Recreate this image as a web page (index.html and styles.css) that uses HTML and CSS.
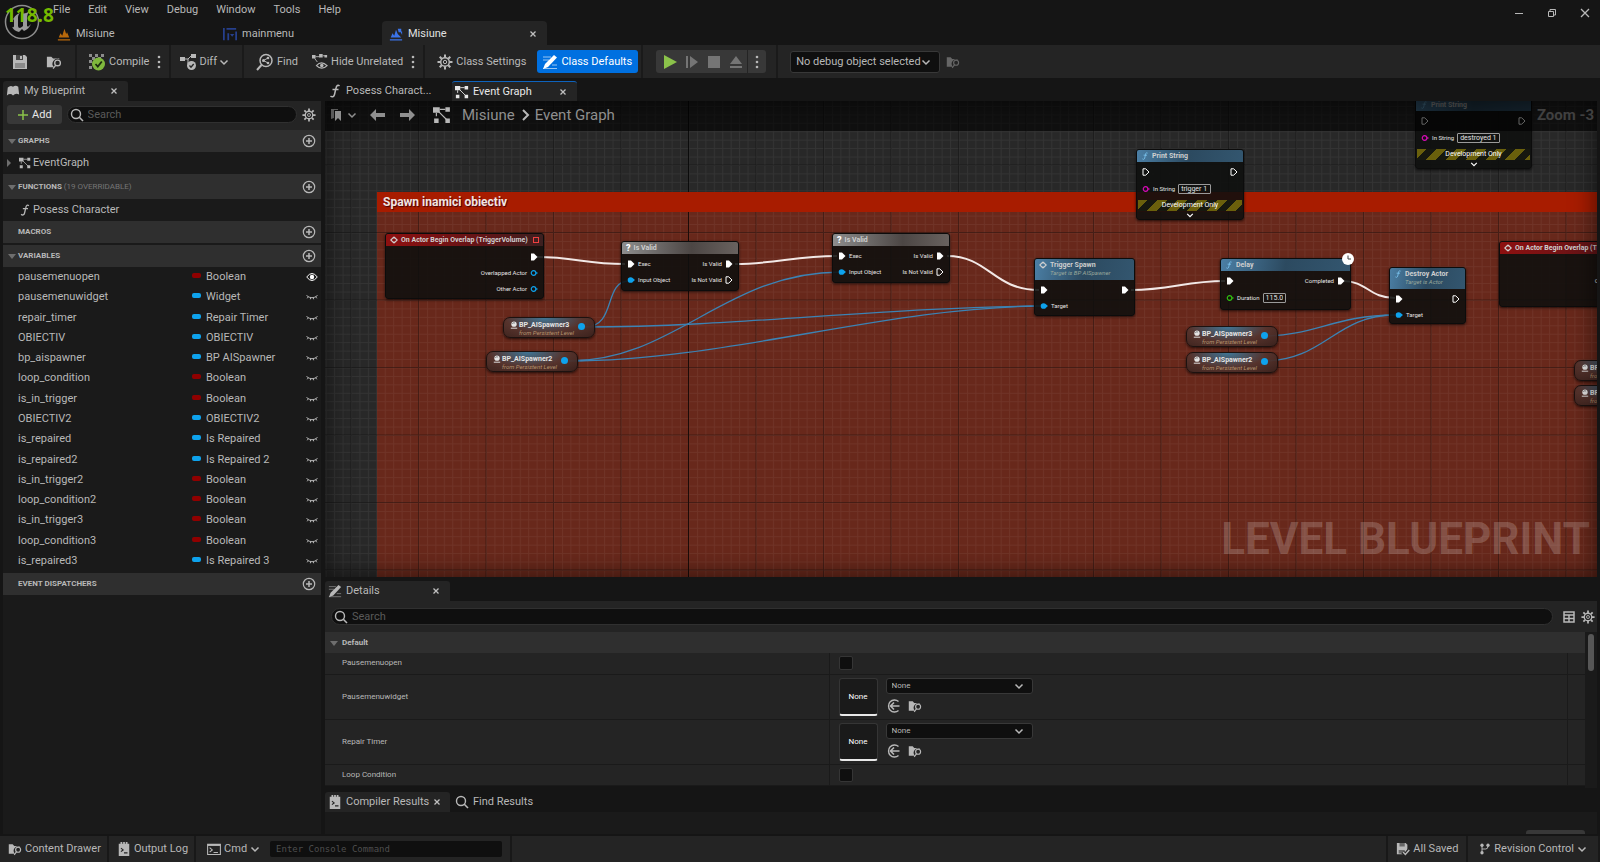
FILE: index.html
```html
<!DOCTYPE html>
<html lang="en">
<head>
    <meta charset="UTF-8">
    <meta name="viewport" content="width=device-width, initial-scale=1.0">
    <title>Misiune - Blueprint Editor</title>
    <link rel="stylesheet" href="styles.css">
</head>
<body>
    <!-- Icon sprites -->
    <svg class="sprites" aria-hidden="true">
        <symbol id="i-level" viewBox="0 0 16 16"><path d="M1 14h14v1.500H1zM2 12l2-5 2 3 2.500-8 2 6 1-2 2.500 6z" fill="currentColor"/></symbol>
        <symbol id="i-levelbp" viewBox="0 0 16 16"><path d="M1 14h14v1.500H1zM2 12l2-5 2 3 2-7 2 5 4 4z" fill="currentColor"/><path d="M10 2h4v4h-3zM13 5h2v4" fill="currentColor"/></symbol>
        <symbol id="i-widget" viewBox="0 0 16 16"><path d="M1 1v14M4 2h11M6 7v8M15 5v10" stroke="currentColor" stroke-width="2" fill="none"/><path d="M8 8h5l-2.500 3z" fill="currentColor"/></symbol>
        <symbol id="i-x" viewBox="0 0 8 8"><path d="M1.500 1.500l5 5M6.500 1.500l-5 5" stroke="currentColor" stroke-width="1.300"/></symbol>
        <symbol id="i-chev" viewBox="0 0 10 10"><path d="M1.500 3.500L5 7l3.500-3.500" stroke="currentColor" stroke-width="1.500" fill="none"/></symbol>
        <symbol id="i-dots" viewBox="0 0 4 14"><circle cx="2" cy="2" r="1.300" fill="currentColor"/><circle cx="2" cy="7" r="1.300" fill="currentColor"/><circle cx="2" cy="12" r="1.300" fill="currentColor"/></symbol>
        <symbol id="i-save" viewBox="0 0 16 16"><path d="M1 1h12l2 2v12H1z" fill="currentColor"/><path d="M4 1h7v5H4z" fill="#444"/><path d="M8 2h2v3H8z" fill="currentColor"/><path d="M3 9h10v5H3z" fill="#8a8a8a"/></symbol>
        <symbol id="i-browse" viewBox="0 0 18 16"><path d="M1 2h5l2 2h7v1a5.500 5.500 0 0 0-6 9H1z" fill="currentColor"/><circle cx="13" cy="9" r="3.200" stroke="currentColor" stroke-width="1.500" fill="none"/><path d="M11 11.500l-3 4" stroke="currentColor" stroke-width="1.500"/></symbol>
        <symbol id="i-compile" viewBox="0 0 18 18"><path d="M1 1h3v3H1zM7 1h3v3H7zM13 1h3v3h-3zM1 7h3v3H1zM1 13h3v3H1zM4 4h3v3H4zM10 4h3v3h-3z" fill="#8c8c8c"/><circle cx="10.500" cy="11" r="6.500" fill="#7fb83d"/><path d="M7.500 11l2.300 2.500 4-5" stroke="#1c2b10" stroke-width="1.800" fill="none"/></symbol>
        <symbol id="i-diff" viewBox="0 0 18 18"><path d="M1 4h5v4H1zM12 1h5v4h-5z" fill="currentColor"/><path d="M6 6h3l3-3M9 6v5" stroke="currentColor" fill="none"/><circle cx="12.500" cy="12.500" r="4.500" fill="currentColor"/><path d="M10.500 12.500l1.500 1.700 2.700-3.200" stroke="#242424" stroke-width="1.300" fill="none"/></symbol>
        <symbol id="i-find" viewBox="0 0 18 18"><circle cx="10" cy="7.500" r="6" stroke="currentColor" stroke-width="1.500" fill="none"/><path d="M5.500 12L1 17" stroke="currentColor" stroke-width="2"/><circle cx="7.500" cy="7.500" r="1.500" fill="currentColor"/><circle cx="12" cy="5" r="1.300" fill="currentColor"/><circle cx="12" cy="10" r="1.300" fill="currentColor"/><path d="M7.500 7.500L12 5M7.500 7.500L12 10" stroke="currentColor"/></symbol>
        <symbol id="i-hide" viewBox="0 0 18 18"><path d="M0 1h4v4H0zM8 0h4v4H8zM14 1h3v3h-3z" fill="currentColor"/><path d="M4 3h5M12 2h3M3 5l3 4" stroke="currentColor"/><path d="M5 13q5.500-6 12 0q-6 6-12 0z" stroke="currentColor" stroke-width="1.300" fill="none"/><circle cx="11" cy="13" r="2" fill="currentColor"/></symbol>
        <symbol id="i-gear" viewBox="0 0 16 16"><circle cx="8" cy="8" r="4.300" stroke="currentColor" stroke-width="1.500" fill="none"/><circle cx="8" cy="8" r="1.700" stroke="currentColor" fill="none"/><path d="M8 .5v3M8 12.500v3M.5 8h3M12.500 8h3M2.700 2.700l2 2M11.300 11.300l2 2M2.700 13.300l2-2M11.300 4.700l2-2" stroke="currentColor" stroke-width="2"/></symbol>
        <symbol id="i-edit" viewBox="0 0 16 16"><path d="M1 3h8M1 6h6M10 11h5M1 14.500h14" stroke="currentColor" opacity=".6"/><path d="M12 1l3 2.500L6 13l-5 2 2-5z" fill="currentColor"/></symbol>
        <symbol id="i-graph" viewBox="0 0 16 16"><path d="M0 1h6v5H0zM11 1h4v4h-4zM1 11h4v4H1zM11 11h4v4h-4z" fill="currentColor"/><path d="M6 3h5M5 5l7 7M3 6v3" stroke="currentColor" fill="none"/></symbol>
        <symbol id="i-func" viewBox="0 0 12 14"><path d="M10.500 2C9 .5 7.500 1.500 7 4L5.500 10.500C5 13 3 13.500 1.500 12M3.500 5.500h6" stroke="currentColor" stroke-width="1.500" fill="none"/></symbol>
        <symbol id="i-book" viewBox="0 0 16 16"><path d="M2 4q3-3 6-1 3-2 6 0l1 9q-4-2-7 1-3-3-7 0z" fill="currentColor"/></symbol>
        <symbol id="i-search" viewBox="0 0 14 14"><circle cx="6" cy="6" r="4.500" stroke="currentColor" stroke-width="1.400" fill="none"/><path d="M9.300 9.300L13 13" stroke="currentColor" stroke-width="1.600"/></symbol>
        <symbol id="i-plus" viewBox="0 0 12 12"><path d="M6 1v10M1 6h10" stroke="currentColor" stroke-width="1.500"/></symbol>
        <symbol id="i-add" viewBox="0 0 14 14"><circle cx="7" cy="7" r="5.700" stroke="currentColor" stroke-width="1.200" fill="none"/><path d="M7 4v6M4 7h6" stroke="currentColor" stroke-width="1.500"/></symbol>
        <symbol id="i-down" viewBox="0 0 8 8"><path d="M0 2h8L4 7z" fill="currentColor"/></symbol>
        <symbol id="i-right" viewBox="0 0 8 8"><path d="M2 0v8l4-4z" fill="currentColor"/></symbol>
        <symbol id="i-eye" viewBox="0 0 12 10"><path d="M.7 5q5.300-7 10.600 0-5.300 7-10.600 0z" stroke="currentColor" fill="none"/><circle cx="6" cy="5" r="2.200" fill="currentColor"/></symbol>
        <symbol id="i-eyeoff" viewBox="0 0 12 10"><path d="M.5 3.500q5.500 4.500 11 0M2.200 5L1.200 6.300M9.800 5l1 1.300M4.700 6l-.4 1.300M7.300 6l.4 1.300" stroke="currentColor" fill="none"/></symbol>
        <symbol id="i-marks" viewBox="0 0 14 14"><path d="M1 1h7v1H4v8l-3 1z" fill="currentColor" opacity=".6"/><path d="M5 3h6v10L8 10l-3 3z" fill="currentColor"/></symbol>
        <symbol id="i-arrow" viewBox="0 0 16 12"><path d="M0 6l6-6v4h9v4H6v4z" fill="currentColor"/></symbol>
        <symbol id="i-log" viewBox="0 0 14 16"><path d="M1 2h2V0h2v2h1V0h2v2h1V0h2v2h2v14H1z" fill="currentColor"/><path d="M3.500 7l2.500 2-2.500 2M7 12.500h4" stroke="#222" stroke-width="1.300" fill="none"/></symbol>
        <symbol id="i-cmd" viewBox="0 0 16 14"><path d="M.7 1.700h14.600v11.600H.7z" stroke="currentColor" stroke-width="1.200" fill="none"/><path d="M.7 2.500h14.600" stroke="currentColor" stroke-width="2"/><path d="M3 5.500L6 8l-3 2.500M7.500 11h5" stroke="currentColor" stroke-width="1.300" fill="none"/></symbol>
        <symbol id="i-saved" viewBox="0 0 16 16"><path d="M1 1h10l2 2v6l-4 5H1z" fill="currentColor"/><path d="M4 1h6v4H4zM3 9h7v4H3z" fill="#666"/><path d="M7.500 11.500l3 3 5-6" stroke="#242424" stroke-width="4" fill="none"/><path d="M8 11.500l2.700 2.700 4.500-5" stroke="currentColor" stroke-width="1.700" fill="none"/></symbol>
        <symbol id="i-branch" viewBox="0 0 14 16"><circle cx="3" cy="3" r="2.200" fill="currentColor"/><circle cx="11" cy="3" r="2.200" fill="currentColor"/><circle cx="3" cy="13" r="2.200" fill="currentColor"/><path d="M3 3v10M3 8h5q3 0 3-4" stroke="currentColor" stroke-width="1.300" fill="none"/></symbol>
        <symbol id="i-grid" viewBox="0 0 12 12"><path d="M1 1h10v10H1zM1 4h10M1 7.500h10M6 4v7" stroke="currentColor" stroke-width="1.500" fill="none"/></symbol>
        <symbol id="i-use" viewBox="0 0 14 14"><path d="M11.500 2.500a6 6 0 1 0 0 9" stroke="currentColor" stroke-width="1.400" fill="none"/><path d="M3.500 7h9M7 3.500L3.500 7 7 10.500" stroke="currentColor" stroke-width="1.600" fill="none"/></symbol>
        <symbol id="i-event" viewBox="0 0 10 10"><path d="M5 1L1 5l4 4M5 1l4 4-4 4M5 1v2M5 7v2" stroke="currentColor" stroke-width="1.500" fill="none"/></symbol>
        <symbol id="i-actor" viewBox="0 0 10 10"><circle cx="5" cy="4" r="3.300" fill="currentColor"/><path d="M3 3.500q1-2 3-1" stroke="#555" fill="none"/><path d="M1 9h8" stroke="currentColor" stroke-width="1.200"/></symbol>
        <symbol id="p-exec" viewBox="0 0 8 8"><path d="M1 .8h2.700L7 4 3.700 7.200H1z" fill="none" stroke="currentColor"/></symbol>
        <symbol id="p-execon" viewBox="0 0 8 8"><path d="M1 .5h3L7.500 4 4 7.500H1z" fill="currentColor"/></symbol>
        <symbol id="p-data" viewBox="0 0 9 8"><circle cx="4" cy="4" r="2.600" fill="none" stroke="currentColor" stroke-width="1.300"/><path d="M7 2.500L9 4 7 5.500z" fill="currentColor"/></symbol>
        <symbol id="p-dataon" viewBox="0 0 9 8"><circle cx="4" cy="4" r="3.200" fill="currentColor"/><path d="M6.500 2L9 4 6.500 6z" fill="currentColor"/></symbol>
    </svg>

    <header class="titlebar">
        <svg class="logo" viewBox="0 0 36 36" aria-label="Unreal Engine"><circle cx="18" cy="18" r="16.500" fill="#111" stroke="#8d8d8d" stroke-width="1.500"/><path d="M8 18q2-7 8-9-2 2-2 4v9q0 2 2 2 2-1 3-2V13q0-2-2-3 5 0 9-3-3 3-3 6v9q1 1 2 0l2-2q-2 5-7 7l-2-2-3 3q-5-1-7-5 2 1 2-1v-6q-1-2-4 2z" fill="#9a9a9a"/></svg>
        <div class="fps">118.8</div>
        <div class="title-main">
            <nav class="menu">
                <a href="#">File</a><a href="#">Edit</a><a href="#">View</a><a href="#">Debug</a><a href="#">Window</a><a href="#">Tools</a><a href="#">Help</a>
            </nav>
            <div class="doc-tabs">
                <div class="doc-tab"><svg class="ic14 orange"><use href="#i-level"/></svg><span>Misiune</span></div>
                <div class="doc-tab"><svg class="ic14 navy"><use href="#i-widget"/></svg><span>mainmenu</span></div>
                <div class="doc-tab active"><svg class="ic14 blue"><use href="#i-levelbp"/></svg><span>Misiune</span><button class="close" aria-label="Close tab"><svg class="ic8"><use href="#i-x"/></svg></button></div>
            </div>
        </div>
        <div class="window-buttons">
            <button aria-label="Minimize"><svg class="ic10" viewBox="0 0 10 10"><path d="M1 5.500h8" stroke="currentColor"/></svg></button>
            <button aria-label="Restore"><svg class="ic10" viewBox="0 0 10 10"><path d="M1.500 3.500h5v5h-5zM3 3V1.500h5.500V7H7" stroke="currentColor" fill="none"/></svg></button>
            <button aria-label="Close"><svg class="ic10" viewBox="0 0 10 10"><path d="M1 1l8 8M9 1L1 9" stroke="currentColor" stroke-width="1.300"/></svg></button>
        </div>
    </header>

    <div class="toolbar">
        <div class="group files">
            <button aria-label="Save"><svg class="ic16"><use href="#i-save"/></svg></button>
            <button aria-label="Browse"><svg class="ic16"><use href="#i-browse"/></svg></button>
        </div>
        <div class="group">
            <button><svg class="ic18"><use href="#i-compile"/></svg>Compile</button>
            <button aria-label="Compile options"><svg class="dots"><use href="#i-dots"/></svg></button>
        </div>
        <div class="group diff">
            <button><svg class="ic18"><use href="#i-diff"/></svg>Diff<svg class="ic10"><use href="#i-chev"/></svg></button>
        </div>
        <div class="group find">
            <button><svg class="ic18"><use href="#i-find"/></svg>Find</button>
            <button class="hide-unrelated"><svg class="ic16"><use href="#i-hide"/></svg>Hide Unrelated</button>
            <button aria-label="Hide options"><svg class="dots"><use href="#i-dots"/></svg></button>
        </div>
        <div class="group classes">
            <button><svg class="ic16"><use href="#i-gear"/></svg>Class Settings</button>
            <button class="primary"><svg class="ic16"><use href="#i-edit"/></svg>Class Defaults</button>
        </div>
        <div class="group play-group">
            <div class="play">
                <button class="go" aria-label="Play"><svg class="ic14" viewBox="0 0 14 14"><path d="M1 0l13 7-13 7z" fill="currentColor"/></svg></button>
                <button aria-label="Skip"><svg class="ic14" viewBox="0 0 14 14"><path d="M1 1h2v12H1zM5 1l8 6-8 6z" fill="currentColor"/></svg></button>
                <button aria-label="Stop"><svg class="ic14" viewBox="0 0 14 14"><path d="M1 1h12v12H1z" fill="currentColor"/></svg></button>
                <button aria-label="Eject"><svg class="ic14" viewBox="0 0 14 14"><path d="M7 1l6 8H1zM1 11h12v2H1z" fill="currentColor"/></svg></button>
                <button class="play-more" aria-label="Play options"><svg class="dots"><use href="#i-dots"/></svg></button>
            </div>
        </div>
        <div class="group debug">
            <div class="pick pick-debug">
                <select aria-label="Debug object"><option>No debug object selected</option></select>
                <svg class="ic10"><use href="#i-chev"/></svg>
            </div>
            <button class="dim" aria-label="Browse debug object"><svg class="ic14"><use href="#i-browse"/></svg></button>
        </div>
    </div>

    <main class="workspace">
        <aside class="blueprint">
            <div class="tabs">
                <div class="tab active"><svg class="ic14"><use href="#i-book"/></svg><span>My Blueprint</span><button class="close" aria-label="Close tab"><svg class="ic8"><use href="#i-x"/></svg></button></div>
            </div>
            <div class="bp-tools">
                <button class="add"><svg class="ic12"><use href="#i-plus"/></svg>Add</button>
                <label class="search"><svg class="ic14"><use href="#i-search"/></svg><input type="text" placeholder="Search" aria-label="Search blueprint"></label>
                <button aria-label="Settings"><svg class="ic14"><use href="#i-gear"/></svg></button>
            </div>
            <div class="bp-body">
                <div class="section"><svg class="ic8"><use href="#i-down"/></svg><h2>Graphs</h2><button aria-label="Add graph"><svg class="ic14"><use href="#i-add"/></svg></button></div>
                <div class="entry"><svg class="ic8"><use href="#i-right"/></svg><svg class="ic12"><use href="#i-graph"/></svg><span>EventGraph</span></div>
                <div class="section tall"><svg class="ic8"><use href="#i-down"/></svg><h2>Functions <small>(19 overridable)</small></h2><button aria-label="Add function"><svg class="ic14"><use href="#i-add"/></svg></button></div>
                <div class="entry"><i class="ic8"></i><svg class="ic12"><use href="#i-func"/></svg><span>Posess Character</span></div>
                <div class="section"><i class="ic8"></i><h2>Macros</h2><button aria-label="Add macro"><svg class="ic14"><use href="#i-add"/></svg></button></div>
                <div class="section spaced"><svg class="ic8"><use href="#i-down"/></svg><h2>Variables</h2><button aria-label="Add variable"><svg class="ic14"><use href="#i-add"/></svg></button></div>
                <ul class="variables">
                    <li><span>pausemenuopen</span><span class="type bool">Boolean</span><svg class="ic12 seen"><use href="#i-eye"/></svg></li>
                    <li><span>pausemenuwidget</span><span class="type">Widget</span><svg class="ic12"><use href="#i-eyeoff"/></svg></li>
                    <li><span>repair_timer</span><span class="type">Repair Timer</span><svg class="ic12"><use href="#i-eyeoff"/></svg></li>
                    <li><span>OBIECTIV</span><span class="type">OBIECTIV</span><svg class="ic12"><use href="#i-eyeoff"/></svg></li>
                    <li><span>bp_aispawner</span><span class="type">BP AISpawner</span><svg class="ic12"><use href="#i-eyeoff"/></svg></li>
                    <li><span>loop_condition</span><span class="type bool">Boolean</span><svg class="ic12"><use href="#i-eyeoff"/></svg></li>
                    <li><span>is_in_trigger</span><span class="type bool">Boolean</span><svg class="ic12"><use href="#i-eyeoff"/></svg></li>
                    <li><span>OBIECTIV2</span><span class="type">OBIECTIV2</span><svg class="ic12"><use href="#i-eyeoff"/></svg></li>
                    <li><span>is_repaired</span><span class="type">Is Repaired</span><svg class="ic12"><use href="#i-eyeoff"/></svg></li>
                    <li><span>is_repaired2</span><span class="type">Is Repaired 2</span><svg class="ic12"><use href="#i-eyeoff"/></svg></li>
                    <li><span>is_in_trigger2</span><span class="type bool">Boolean</span><svg class="ic12"><use href="#i-eyeoff"/></svg></li>
                    <li><span>loop_condition2</span><span class="type bool">Boolean</span><svg class="ic12"><use href="#i-eyeoff"/></svg></li>
                    <li><span>is_in_trigger3</span><span class="type bool">Boolean</span><svg class="ic12"><use href="#i-eyeoff"/></svg></li>
                    <li><span>loop_condition3</span><span class="type bool">Boolean</span><svg class="ic12"><use href="#i-eyeoff"/></svg></li>
                    <li><span>is_repaired3</span><span class="type">Is Repaired 3</span><svg class="ic12"><use href="#i-eyeoff"/></svg></li>
                </ul>
                <div class="section"><i class="ic8"></i><h2>Event Dispatchers</h2><button aria-label="Add dispatcher"><svg class="ic14"><use href="#i-add"/></svg></button></div>
            </div>
        </aside>

        <section class="center">
            <div class="tabs">
                <div class="tab"><svg class="ic14"><use href="#i-func"/></svg><span>Posess Charact...</span></div>
                <div class="tab active focus"><svg class="ic14"><use href="#i-graph"/></svg><span>Event Graph</span><button class="close" aria-label="Close tab"><svg class="ic8"><use href="#i-x"/></svg></button></div>
            </div>

            <div class="graph">
                <div class="comment"></div>
                <svg class="layer" aria-hidden="true">
                    <defs>
                        <pattern id="minor" width="8.4375" height="8.4375" patternUnits="userSpaceOnUse" x="26" y="64"><path d="M0 .5h8.500M.5 0v8.500" stroke="#fff" stroke-opacity=".055"/></pattern>
                        <pattern id="major" width="67.5" height="67.5" patternUnits="userSpaceOnUse" x="25.5" y="63.500"><path d="M0 .5h67.500M.5 0v67.500" stroke="#000" stroke-opacity=".36"/></pattern>
                    </defs>
                    <rect width="100%" height="100%" fill="url(#minor)"/>
                    <rect width="100%" height="100%" fill="url(#major)"/>
                    <path d="M363.500 0v600" stroke="#000" stroke-opacity=".6"/>
                </svg>
                <h3>Spawn inamici obiectiv</h3>
                <div class="watermark">LEVEL BLUEPRINT</div>

                <svg class="layer wires" aria-hidden="true">
                    <g class="exec">
                        <path d="M212 156C250 156 260 163 300 163"/>
                        <path d="M410 163C450 163 470 155 512 155"/>
                        <path d="M622 155C664 155 668 189 714 189"/>
                        <path d="M806 189C846 189 860 180 900 180"/>
                        <path d="M1018 180C1042 180 1044 197 1070 197"/>
                    </g>
                    <g class="object">
                        <path d="M260 226C292 226 278 180 304 180"/>
                        <path d="M260 226C410 226 560 206 716 205"/>
                        <path d="M244 260C350 260 400 171 516 171"/>
                        <path d="M244 260C400 260 560 206 716 205"/>
                        <path d="M938 235C990 235 1010 214 1070 214"/>
                        <path d="M938 260C1000 260 1010 214 1070 214"/>
                    </g>
                </svg>

                <div class="node event n-overlap">
                    <h4><svg class="ic8"><use href="#i-event"/></svg>On Actor Begin Overlap (TriggerVolume)<i class="delegate"></i></h4>
                    <div class="pins"><span></span><span class="pin"><svg><use href="#p-execon"/></svg></span></div>
                    <div class="pins"><span></span><span class="pin">Overlapped Actor<svg class="obj"><use href="#p-data"/></svg></span></div>
                    <div class="pins"><span></span><span class="pin">Other Actor<svg class="obj"><use href="#p-data"/></svg></span></div>
                </div>
                <div class="node macro n-valid1">
                    <h4><b>?</b>Is Valid</h4>
                    <div class="pins"><span class="pin"><svg><use href="#p-execon"/></svg>Exec</span><span class="pin">Is Valid<svg><use href="#p-execon"/></svg></span></div>
                    <div class="pins"><span class="pin"><svg class="obj"><use href="#p-dataon"/></svg>Input Object</span><span class="pin">Is Not Valid<svg><use href="#p-exec"/></svg></span></div>
                </div>
                <div class="node macro n-valid2">
                    <h4><b>?</b>Is Valid</h4>
                    <div class="pins"><span class="pin"><svg><use href="#p-execon"/></svg>Exec</span><span class="pin">Is Valid<svg><use href="#p-execon"/></svg></span></div>
                    <div class="pins"><span class="pin"><svg class="obj"><use href="#p-dataon"/></svg>Input Object</span><span class="pin">Is Not Valid<svg><use href="#p-exec"/></svg></span></div>
                </div>
                <div class="node call n-spawn">
                    <h4 class="two"><svg class="ic8"><use href="#i-event"/></svg><span>Trigger Spawn<em>Target is BP AISpawner</em></span></h4>
                    <div class="pins"><span class="pin"><svg><use href="#p-execon"/></svg></span><span class="pin"><svg><use href="#p-execon"/></svg></span></div>
                    <div class="pins"><span class="pin"><svg class="obj"><use href="#p-dataon"/></svg>Target</span></div>
                </div>
                <div class="node call n-delay">
                    <h4><svg class="ic8 fn"><use href="#i-func"/></svg>Delay</h4>
                    <div class="pins"><span class="pin"><svg><use href="#p-execon"/></svg></span><span class="pin">Completed<svg><use href="#p-execon"/></svg></span></div>
                    <div class="pins value"><span class="pin"><svg class="float"><use href="#p-data"/></svg><label for="duration">Duration</label><input id="duration" class="val-float" type="text" value="115.0"></span></div>
                    <svg class="clock" viewBox="0 0 12 12"><circle cx="6" cy="6" r="6" fill="#fff"/><path d="M6 2.500V6h3" stroke="#444" fill="none"/></svg>
                </div>
                <div class="node call n-destroy">
                    <h4 class="two"><svg class="ic8 fn"><use href="#i-func"/></svg><span>Destroy Actor<em>Target is Actor</em></span></h4>
                    <div class="pins"><span class="pin"><svg><use href="#p-execon"/></svg></span><span class="pin"><svg><use href="#p-exec"/></svg></span></div>
                    <div class="pins"><span class="pin"><svg class="obj"><use href="#p-dataon"/></svg>Target</span></div>
                </div>
                <div class="node event n-overlap2">
                    <h4><svg class="ic8"><use href="#i-event"/></svg>On Actor Begin Overlap (TriggerVolume)<i class="delegate"></i></h4>
                    <div class="pins"><span></span><span class="pin"><svg><use href="#p-execon"/></svg></span></div>
                    <div class="pins"><span></span><span class="pin">Overlapped Actor<svg class="obj"><use href="#p-data"/></svg></span></div>
                    <div class="pins"><span></span><span class="pin">Other Actor<svg class="obj"><use href="#p-data"/></svg></span></div>
                </div>
                <div class="node call n-print1">
                    <h4><svg class="ic8 fn"><use href="#i-func"/></svg>Print String</h4>
                    <div class="pins"><span class="pin"><svg><use href="#p-exec"/></svg></span><span class="pin"><svg><use href="#p-exec"/></svg></span></div>
                    <div class="pins value"><span class="pin"><svg class="str"><use href="#p-data"/></svg><label for="print1">In String</label><input id="print1" class="val-short" type="text" value="trigger 1"></span></div>
                    <div class="devonly">Development Only</div>
                    <svg class="ic8 expand"><use href="#i-chev"/></svg>
                </div>
                <div class="node call n-print2">
                    <h4><svg class="ic8 fn"><use href="#i-func"/></svg>Print String</h4>
                    <div class="pins"><span class="pin"><svg><use href="#p-exec"/></svg></span><span class="pin"><svg><use href="#p-exec"/></svg></span></div>
                    <div class="pins value"><span class="pin"><svg class="str"><use href="#p-data"/></svg><label for="print2">In String</label><input id="print2" class="val-long" type="text" value="destroyed 1"></span></div>
                    <div class="devonly">Development Only</div>
                    <svg class="ic8 expand"><use href="#i-chev"/></svg>
                </div>

                <div class="ref r-a"><svg class="ic8"><use href="#i-actor"/></svg><span>BP_AISpawner3<em>from Persistent Level</em></span><i></i></div>
                <div class="ref r-b"><svg class="ic8"><use href="#i-actor"/></svg><span>BP_AISpawner2<em>from Persistent Level</em></span><i></i></div>
                <div class="ref r-c"><svg class="ic8"><use href="#i-actor"/></svg><span>BP_AISpawner3<em>from Persistent Level</em></span><i></i></div>
                <div class="ref r-d"><svg class="ic8"><use href="#i-actor"/></svg><span>BP_AISpawner2<em>from Persistent Level</em></span><i></i></div>
                <div class="ref r-e"><svg class="ic8"><use href="#i-actor"/></svg><span>BP_AISpawner3<em>from Persistent Level</em></span><i></i></div>
                <div class="ref r-f"><svg class="ic8"><use href="#i-actor"/></svg><span>BP_AISpawner2<em>from Persistent Level</em></span><i></i></div>

                <div class="vignette"></div>
                <div class="crumbs">
                    <button aria-label="Bookmarks"><svg class="ic14"><use href="#i-marks"/></svg><svg class="ic10"><use href="#i-chev"/></svg></button>
                    <button class="nav" aria-label="Back"><svg class="ic16"><use href="#i-arrow"/></svg></button>
                    <button class="nav forward" aria-label="Forward"><svg class="ic16"><use href="#i-arrow"/></svg></button>
                    <svg class="ic18 crumb-icon"><use href="#i-graph"/></svg>
                    <a href="#">Misiune</a>
                    <svg class="ic12 sep" viewBox="0 0 12 12"><path d="M4 1l5 5-5 5" stroke="currentColor" stroke-width="2" fill="none"/></svg>
                    <a href="#">Event Graph</a>
                    <span class="zoom">Zoom -3</span>
                </div>
            </div>

            <div class="details">
                <div class="tabs">
                    <div class="tab active"><svg class="ic14"><use href="#i-edit"/></svg><span>Details</span><button class="close" aria-label="Close tab"><svg class="ic8"><use href="#i-x"/></svg></button></div>
                </div>
                <div class="details-tools">
                    <label class="search"><svg class="ic14"><use href="#i-search"/></svg><input type="text" placeholder="Search" aria-label="Search details"></label>
                    <button aria-label="Table view"><svg class="ic12"><use href="#i-grid"/></svg></button>
                    <button aria-label="Settings"><svg class="ic14"><use href="#i-gear"/></svg></button>
                </div>
                <div class="details-body">
                    <div class="props">
                        <h2><svg class="ic8"><use href="#i-down"/></svg>Default</h2>
                        <table>
                            <tr class="small">
                                <th><label for="pmopen">Pausemenuopen</label></th>
                                <td><input type="checkbox" id="pmopen"></td>
                                <td class="reset"></td>
                            </tr>
                            <tr>
                                <th><label for="pmwidget">Pausemenuwidget</label></th>
                                <td>
                                    <div class="asset">
                                        <div class="thumb">None</div>
                                        <div>
                                            <div class="pick"><select id="pmwidget"><option>None</option></select><svg class="ic10"><use href="#i-chev"/></svg></div>
                                            <div class="asset-tools"><button aria-label="Use selected"><svg class="ic14"><use href="#i-use"/></svg></button><button aria-label="Browse"><svg class="ic14"><use href="#i-browse"/></svg></button></div>
                                        </div>
                                    </div>
                                </td>
                                <td class="reset"></td>
                            </tr>
                            <tr>
                                <th><label for="rtimer">Repair Timer</label></th>
                                <td>
                                    <div class="asset">
                                        <div class="thumb">None</div>
                                        <div>
                                            <div class="pick"><select id="rtimer"><option>None</option></select><svg class="ic10"><use href="#i-chev"/></svg></div>
                                            <div class="asset-tools"><button aria-label="Use selected"><svg class="ic14"><use href="#i-use"/></svg></button><button aria-label="Browse"><svg class="ic14"><use href="#i-browse"/></svg></button></div>
                                        </div>
                                    </div>
                                </td>
                                <td class="reset"></td>
                            </tr>
                            <tr class="small">
                                <th><label for="loopc">Loop Condition</label></th>
                                <td><input type="checkbox" id="loopc"></td>
                                <td class="reset"></td>
                            </tr>
                        </table>
                    </div>
                    <div class="scroll"><i></i></div>
                </div>
            </div>

            <div class="results">
                <div class="tabs">
                    <div class="tab active"><svg class="ic14"><use href="#i-log"/></svg><span>Compiler Results</span><button class="close" aria-label="Close tab"><svg class="ic8"><use href="#i-x"/></svg></button></div>
                    <div class="tab"><svg class="ic14"><use href="#i-search"/></svg><span>Find Results</span></div>
                </div>
                <div class="results-body"><i></i></div>
            </div>
        </section>
    </main>

    <footer class="status">
        <button><svg class="ic14"><use href="#i-browse"/></svg>Content Drawer</button>
        <button><svg class="ic14"><use href="#i-log"/></svg>Output Log</button>
        <div class="console">
            <button><svg class="ic14"><use href="#i-cmd"/></svg>Cmd<svg class="ic10"><use href="#i-chev"/></svg></button>
            <input type="text" placeholder="Enter Console Command" aria-label="Console command">
        </div>
        <button class="saved"><svg class="ic14"><use href="#i-saved"/></svg>All Saved</button>
        <button class="revision"><svg class="ic12"><use href="#i-branch"/></svg>Revision Control<svg class="ic10"><use href="#i-chev"/></svg></button>
    </footer>
</body>
</html>
```
FILE: styles.css
```css
* {
    box-sizing: border-box;
}
body {
    margin: 0;
    height: 100vh;
    display: flex;
    flex-direction: column;
    overflow: hidden;
    background: #151515;
    color: #b8b8b8;
    font-family: Roboto, "Open Sans", sans-serif;
    font-size: 11px;
    line-height: 14px;
}
h2, h3, h4, ul {
    margin: 0;
    padding: 0;
    list-style: none;
}
a {
    color: inherit;
    text-decoration: none;
}
button {
    display: flex;
    align-items: center;
    gap: 3px;
    padding: 0;
    border: none;
    background: none;
    color: inherit;
    font: inherit;
    white-space: nowrap;
}
input, select {
    font: inherit;
    color: inherit;
    border: none;
    background: none;
    outline: none;
    min-width: 0;
    padding: 0;
}
em {
    display: block;
}
svg {
    flex: none;
    display: block;
}
.sprites {
    position: absolute;
    width: 0;
    height: 0;
}
.ic8 { width: 8px; height: 8px; flex: none; }
.ic10 { width: 10px; height: 10px; }
.ic12 { width: 12px; height: 12px; }
.ic14 { width: 14px; height: 14px; }
.ic16 { width: 16px; height: 16px; }
.ic18 { width: 18px; height: 18px; }
.dots { width: 4px; height: 14px; }
.orange { color: #b9690b; }
.navy { color: #263f8c; }
.blue { color: #3b73e8; }

/* Title bar */
.titlebar {
    position: relative;
    display: flex;
    height: 45px;
    flex: none;
}
.logo {
    width: 36px;
    height: 36px;
    margin: 4px 10px 0 4px;
}
.fps {
    position: absolute;
    left: 5px;
    top: 3px;
    color: #76b900;
    font: bold 19px/24px "Noto Sans", sans-serif;
}
.title-main {
    flex: 1;
    display: flex;
    flex-direction: column;
    justify-content: space-between;
}
.menu {
    display: flex;
    gap: 18px;
    padding: 3px 0 0 3px;
}
.doc-tabs {
    display: flex;
    gap: 1px;
}
.doc-tab {
    display: flex;
    align-items: center;
    gap: 5px;
    width: 165px;
    height: 24px;
    padding: 1px 10px 0 7px;
    border-radius: 4px 4px 0 0;
}
.doc-tab.active {
    background: #242424;
    color: #e0e0e0;
}
.close {
    margin-left: auto;
    color: #c0c0c0;
}
.window-buttons {
    display: flex;
    align-items: flex-start;
    gap: 23px;
    padding: 8px 10px;
}

/* Toolbar */
.toolbar {
    display: flex;
    flex: none;
    height: 33px;
    background: #242424;
}
.group {
    display: flex;
    align-items: center;
    gap: 8px;
    padding: 0 8px 0 11px;
    border-right: 2px solid #1a1a1a;
}
.files {
    gap: 18px;
    padding: 0 13px 0 12px;
}
.diff {
    padding: 0 13px 0 8px;
}
.diff button {
    gap: 2px;
}
.find {
    padding-left: 12px;
}
.hide-unrelated {
    margin-left: 6px;
}
.classes {
    gap: 11px;
    padding: 0 3px 0 12px;
}
.primary {
    height: 23px;
    padding: 0 6px 0 5px;
    border-radius: 3px;
    background: #0070e0;
    color: #fff;
}
.play-group {
    padding: 0 10px 0 13px;
}
.play {
    display: flex;
    height: 23px;
    border-radius: 3px;
    background: #383838;
    color: #757575;
    overflow: hidden;
}
.play button {
    padding: 0 4px;
}
.play .go {
    color: #8bc24a;
    padding-left: 7px;
}
.play .play-more {
    padding: 0 7px;
    border-left: 1px solid #242424;
    color: #b8b8b8;
}
.debug {
    border: none;
    gap: 6px;
    padding-left: 12px;
}
.pick {
    display: grid;
    align-items: center;
    width: 147px;
    height: 16px;
    border: 1px solid #383838;
    border-radius: 3px;
    background: #0f0f0f;
    font-size: 8px;
}
.pick > * {
    grid-area: 1 / 1;
}
.pick select {
    appearance: none;
    width: 100%;
    padding: 0 10px 0 5px;
}
.pick svg {
    justify-self: end;
    margin-right: 8px;
    pointer-events: none;
}
.pick-debug {
    width: 150px;
    height: 22px;
    font-size: 11px;
}
.dim {
    color: #666;
}

/* Workspace */
.workspace {
    flex: 1;
    min-height: 0;
    display: flex;
    gap: 4px;
    padding: 0 3px 2px;
}
.tabs {
    display: flex;
    align-items: flex-end;
    gap: 2px;
    height: 23px;
    flex: none;
}
.tab {
    display: flex;
    align-items: center;
    gap: 4px;
    width: 125px;
    height: 20px;
    padding: 0 10px 0 3px;
    border-radius: 3px 3px 0 0;
    white-space: nowrap;
}
.tab.active {
    background: #242424;
}
.tab.focus {
    border-top: 1px solid #0e63bd;
    color: #e8e8e8;
}
.blueprint {
    flex: 0 0 318px;
    display: flex;
    flex-direction: column;
}
.bp-tools {
    display: flex;
    align-items: center;
    gap: 5px;
    height: 29px;
    padding: 0 5px 2px 4px;
    background: #242424;
}
.add {
    height: 19px;
    padding: 0 10px;
    border-radius: 3px;
    background: #383838;
    color: #e8e8e8;
}
.add svg {
    color: #8bc24a;
}
.search {
    flex: 1;
    display: flex;
    align-items: center;
    gap: 4px;
    height: 17px;
    padding: 0 2px;
    border: 1px solid #303030;
    border-radius: 9px;
    background: #0f0f0f;
}
.search input {
    flex: 1;
}
.search input::placeholder {
    color: #5a5a5a;
}
.bp-body {
    flex: 1;
    background: #1a1a1a;
}
.section {
    display: flex;
    align-items: center;
    gap: 2px;
    height: 22px;
    padding: 0 5px;
    background: #2f2f2f;
}
.section.tall {
    height: 25px;
}
.section.spaced {
    margin-top: 2px;
}
.section h2 {
    flex: 1;
    font-size: 8px;
    line-height: 12px;
    text-transform: uppercase;
}
.section h2 small {
    font-size: 8px;
    font-weight: normal;
    color: #757575;
}
.section .ic8, .props h2 svg, .entry .ic8 {
    color: #6e6e6e;
}
.entry {
    display: flex;
    align-items: center;
    gap: 2px;
    height: 22px;
    padding-left: 2px;
}
.entry .ic8 {
    margin-right: 4px;
}
.variables {
    display: grid;
    min-height: 306px;
    padding: 0 3px 2px 15px;
}
.variables li {
    display: grid;
    grid-template-columns: 174px 1fr 12px;
    align-items: center;
}
.type::before {
    content: "";
    display: inline-block;
    width: 9px;
    height: 5px;
    margin-right: 5px;
    border-radius: 2px;
    background: #0ea2ec;
    vertical-align: 2px;
}
.type.bool::before {
    background: #900000;
}
.seen {
    color: #fff;
}
.center {
    flex: 1;
    min-width: 0;
    display: flex;
    flex-direction: column;
}

/* Graph */
.graph {
    position: relative;
    flex: 1;
    min-height: 0;
    overflow: hidden;
    background: #282828;
    font-size: 6px;
    line-height: 8px;
    color: #e4e4e4;
}
.layer {
    position: absolute;
    width: 100%;
    height: 100%;
}
.wires path {
    fill: none;
}
.wires .exec {
    stroke: #f2e8e6;
    stroke-width: 2;
}
.wires .object {
    stroke: #3c83b4;
    stroke-width: 1.3;
}
.comment {
    position: absolute;
    inset: 91px 0 0 52px;
    background: #68281b;
}
.graph h3 {
    position: absolute;
    inset: 91px 0 auto 52px;
    height: 20px;
    padding-left: 6px;
    background: #a81c00;
    color: #f0e6e4;
    font-size: 12px;
    line-height: 21px;
    text-shadow: 1px 1px 1px #400;
}
.watermark {
    position: absolute;
    right: 7px;
    bottom: 12px;
    color: rgba(255, 255, 255, 0.2);
    font-size: 44px;
    font-weight: bold;
    line-height: 52px;
}
.node {
    position: absolute;
    border: 1px solid #0c0c0c;
    border-radius: 3px;
    background: rgba(14, 15, 14, 0.88);
    box-shadow: 0 1px 3px rgba(0, 0, 0, 0.7);
}
.node h4 {
    display: flex;
    align-items: center;
    gap: 3px;
    height: 12px;
    margin-bottom: 2px;
    padding: 0 4px;
    border-radius: 2px 2px 0 0;
    font-size: 7px;
    white-space: nowrap;
    color: #cfcfcf;
}
.node h4.two {
    height: 21px;
    align-items: flex-start;
    padding-top: 2px;
}
.node h4 em, .ref em {
    font-size: 6px;
    font-weight: normal;
    color: #9aa89c;
}
.node h4 b {
    font-size: 9px;
    color: #fff;
}
.node.event h4 {
    margin-bottom: 3px;
    background: linear-gradient(90deg, #8e1010, #641417 60%, #3c2020);
}
.event .delegate {
    width: 6px;
    height: 6px;
    margin-left: auto;
    border: 1px solid #f04040;
}
.macro h4 {
    background: linear-gradient(90deg, #8d8d8d, #4c4644 60%, #69625f);
}
.call h4 {
    background: linear-gradient(100deg, #4b7fa5, #2c4a60 50%, #33566f);
}
.fn {
    color: #7cc4f0;
}
.pins {
    display: flex;
    justify-content: space-between;
    align-items: center;
    height: 16px;
    padding: 0 5px;
    white-space: nowrap;
}
.pins.value {
    height: 18px;
}
.pin {
    display: flex;
    align-items: center;
    gap: 3px;
}
.pin svg {
    width: 8px;
    height: 8px;
    color: #fff;
}
.pin .obj { color: #0ea2ec; }
.pin .str { color: #d60bb4; }
.pin .float { color: #30c010; }
.pin input {
    height: 10px;
    padding: 0 2px;
    border: 1px solid #9a9a9a;
    border-radius: 1px;
    font-size: 7px;
}
.val-float { width: 23px; }
.val-short { width: 33px; }
.val-long { width: 43px; }
.devonly {
    height: 11px;
    margin: 2px 1px 0;
    background: repeating-linear-gradient(135deg, #6a600c 0 7px, #16180f 7px 14px);
    text-align: center;
    font-size: 7px;
    line-height: 11px;
    color: #fff;
}
.expand {
    margin: 0 auto;
    color: #fff;
}
.clock {
    position: absolute;
    right: -4px;
    top: -6px;
    width: 12px;
    height: 12px;
}
.n-overlap { left: 60px; top: 132px; width: 159px; height: 66px; }
.n-overlap2 { left: 1174px; top: 140px; width: 159px; height: 66px; }
.n-valid1 { left: 296px; top: 140px; width: 118px; height: 50px; }
.n-valid2 { left: 507px; top: 132px; width: 118px; height: 50px; }
.n-spawn { left: 709px; top: 157px; width: 101px; height: 58px; }
.n-delay { left: 895px; top: 157px; width: 131px; height: 52px; }
.n-destroy { left: 1064px; top: 166px; width: 77px; height: 57px; }
.n-print1 { left: 811px; top: 48px; width: 108px; height: 71px; }
.n-print2 { left: 1090px; top: -3px; width: 117px; height: 71px; }
.ref {
    position: absolute;
    display: flex;
    gap: 1px;
    width: 92px;
    height: 21px;
    padding: 3px 9px 0 6px;
    border: 1px solid #1c1210;
    border-radius: 7px;
    background: radial-gradient(ellipse at 45% 0, #3f7595 0, rgba(84, 52, 46, 0.9) 55%, #3a211c 100%);
    box-shadow: 0 1px 3px rgba(0, 0, 0, 0.7);
    font-size: 7px;
    font-weight: bold;
    white-space: nowrap;
}
.ref em {
    color: #b4946f;
}
.ref span {
    width: 60px;
}
.ref i {
    width: 7px;
    height: 7px;
    margin: 2px 0 0 auto;
    border-radius: 4px;
    background: #0ea2ec;
}
.r-a { left: 178px; top: 216px; }
.r-b { left: 161px; top: 250px; }
.r-c { left: 861px; top: 225px; }
.r-d { left: 861px; top: 251px; }
.r-e { left: 1249px; top: 259px; }
.r-f { left: 1249px; top: 284px; }
.vignette {
    position: absolute;
    inset: 0;
    box-shadow: inset 0 0 26px rgba(0, 0, 0, 0.6);
    pointer-events: none;
}
.crumbs {
    position: absolute;
    inset: 0 0 auto;
    display: flex;
    align-items: center;
    height: 30px;
    padding: 0 3px 2px 5px;
    background: rgba(0, 0, 0, 0.6);
    color: #8f8f8f;
    font-size: 15px;
    line-height: 20px;
}
.nav {
    margin-left: 13px;
}
.forward svg {
    transform: scaleX(-1);
}
.crumb-icon {
    margin: 0 11px 0 18px;
    color: #b8b8b8;
}
.sep {
    margin: 0 4px;
    color: #b8b8b8;
}
.zoom {
    margin-left: auto;
    color: #404040;
    font-weight: bold;
}

/* Details */
.details {
    flex: 0 0 211px;
    display: flex;
    flex-direction: column;
    overflow: hidden;
}
.details .tabs, .results .tabs {
    height: 24px;
}
.details-tools {
    display: flex;
    align-items: center;
    gap: 6px;
    height: 31px;
    flex: none;
    padding: 0 2px 0 6px;
    background: #242424;
}
.details-tools .search {
    margin-right: 4px;
}
.details-body {
    flex: 1;
    min-height: 0;
    display: flex;
}
.props {
    flex: 1;
    font-size: 8px;
    line-height: 12px;
}
.props h2 {
    display: flex;
    align-items: center;
    gap: 4px;
    height: 21px;
    padding-left: 5px;
    background: #2f2f2f;
    font-size: 8px;
}
.props table {
    width: 100%;
    border-collapse: collapse;
    background: #242424;
}
.props td, .props th {
    height: 45px;
    padding: 0;
    border-bottom: 1px solid #1a1a1a;
    font-weight: normal;
    text-align: left;
}
.props .small td, .props .small th {
    height: 21px;
}
.props th {
    width: 40%;
    padding-left: 17px;
}
.props td {
    padding-left: 9px;
    border-left: 1px solid #1a1a1a;
}
.props .reset {
    width: 18px;
    padding: 0;
}
.props input {
    display: block;
    appearance: none;
    width: 14px;
    height: 14px;
    margin: 0;
    border: 1px solid #353535;
    border-radius: 2px;
    background: #0f0f0f;
}
.asset {
    display: flex;
    gap: 8px;
}
.thumb {
    width: 39px;
    height: 38px;
    border: 1px solid #353535;
    border-bottom: 2px solid #e8e8e8;
    border-radius: 3px;
    background: #1a1a1a;
    color: #fff;
    line-height: 36px;
    text-align: center;
}
.asset-tools {
    display: flex;
    gap: 7px;
    padding: 5px 0 0 1px;
}
.scroll {
    width: 12px;
    padding: 2px 3px;
    background: #1a1a1a;
}
.scroll i {
    display: block;
    height: 37px;
    border-radius: 3px;
    background: #575757;
}
.results {
    flex: 0 0 46px;
    display: flex;
    flex-direction: column;
}
.results-body {
    flex: 1;
    display: flex;
    justify-content: flex-end;
    align-items: flex-end;
    padding-right: 12px;
    background: #1a1a1a;
}
.results-body i {
    width: 59px;
    height: 4px;
    border-radius: 3px 3px 0 0;
    background: #383838;
}

/* Status bar */
.status {
    display: flex;
    flex: none;
    height: 26px;
    background: #242424;
}
.status > * {
    padding: 0 6px 0 8px;
    border-right: 2px solid #181818;
}
.console {
    display: flex;
    align-items: center;
    gap: 10px;
    padding: 0 8px 0 11px;
}
.console input {
    width: 232px;
    height: 16px;
    padding: 0 6px;
    border-radius: 2px;
    background: #0f0f0f;
    font: 9px "DejaVu Sans Mono", monospace;
}
.console input::placeholder {
    color: #4e4e4e;
}
.saved {
    margin-left: auto;
    padding-right: 8px;
    border-left: 2px solid #181818;
}
.revision {
    padding: 0 11px;
}
```
